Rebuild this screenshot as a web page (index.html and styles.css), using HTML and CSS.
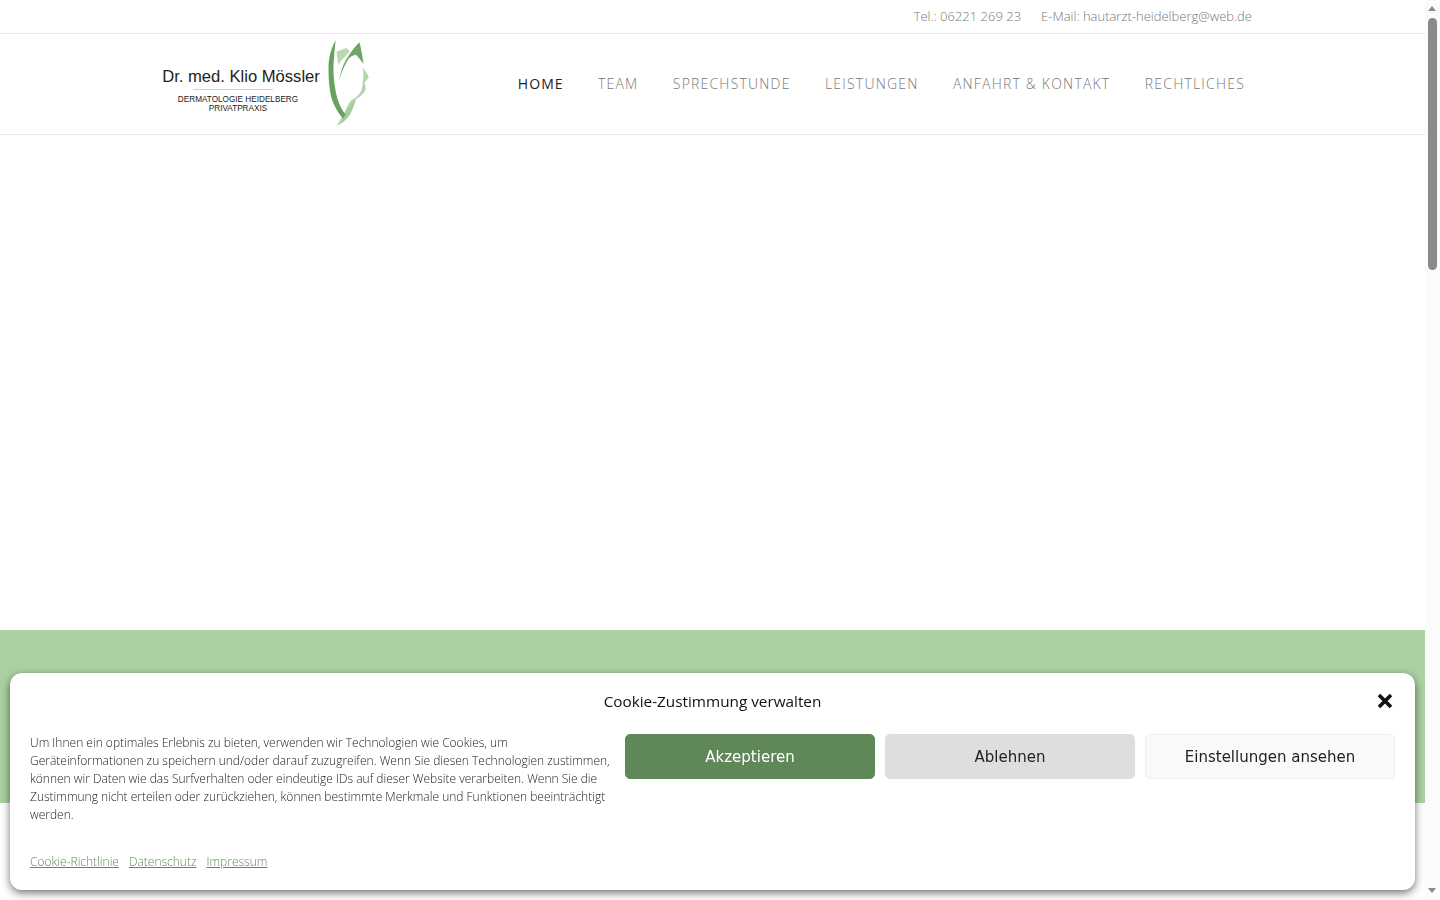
FILE: index.html
```html
<!DOCTYPE html>
<html lang="de">
<head>
    <meta charset="UTF-8">
    <meta name="viewport" content="width=device-width, initial-scale=1.0">
    <link rel="stylesheet" href="styles.css">
    <title>Dr. med. Klio Mössler</title>
</head>
<body>
    <div class="page">
        <div class="topbar">
            <span>Tel.: 06221 269 23</span>
            <span>E-Mail: hautarzt-heidelberg@web.de</span>
        </div>
        <header class="header">
            <a class="logo" href="#">
                <div class="logo-text">
                    <div class="logo-name">Dr. med. Klio Mössler</div>
                    <div class="logo-sub">DERMATOLOGIE HEIDELBERG</div>
                    <div class="logo-sub">PRIVATPRAXIS</div>
                </div>
                <svg class="logo-leaf" width="60" height="96" viewBox="0 2 60 92.700" preserveAspectRatio="none">
                    <path d="M43 33C47 38 49 41 48.500 42.500L44.500 47C45.500 50 46 53 45.500 54C43 59 38 62 35 64C31 68 28 74 24 81C22 84 19 87 16.500 89C19 85 21 82 23 79C25 74 28 68 31 64C36 62 41 58 42 52C43 46 44 40 43 33Z" fill="#b2d5aa"/>
                    <path d="M36 63C31 66 27 73 24 80C22 84 19 87 16.500 89C22 86 28 82 31 76C33 71 35 67 36 63Z" fill="#a5cd9c"/>
                    <path d="M16.500 17C20 16 24 14.500 26.500 13.500L30 17C27 20 24 23 22 25C20 27 19 29 18.500 30C17.500 26 17 21 16.500 17Z" fill="#b9d8b2"/>
                    <path d="M39.500 8C41 14 42.500 21 43.500 29C41 26 38.500 22 36 20C33 20.500 31 21.500 29 23.500C26 27 22 36 19 45C21 35 24 27 28 22C32 16 36 11 39.500 8Z" fill="#6ea667"/>
                    <path d="M15.700 6C11 14 8.500 23 8.500 33C8.500 43 9 52 11 60C13 68 18 76 23 82L25.500 78C21 72 17.500 65 16 57C14 47 13 38 13.500 30C14 21 14.800 13 15.700 6Z" fill="#67a05f"/>
                </svg>
            </a>
            <nav class="nav">
                <a class="active" href="#">HOME</a>
                <a href="#">TEAM</a>
                <a href="#">SPRECHSTUNDE</a>
                <a href="#">LEISTUNGEN</a>
                <a href="#">ANFAHRT &amp; KONTAKT</a>
                <a href="#">RECHTLICHES</a>
            </nav>
        </header>
        <main class="hero"></main>
        <section class="green-band"></section>
    </div>

    <div class="scrollbar"><div class="thumb"></div></div>

    <div class="cookie">
        <div class="cookie-head">
            <div class="cookie-title">Cookie-Zustimmung verwalten</div>
            <svg class="cookie-close" width="16" height="16" viewBox="0 0 16 16">
                <path d="M2 2l12 12M14 2L2 14" stroke="#111" stroke-width="3.600" fill="none"/>
            </svg>
        </div>
        <div class="cookie-body">
            <div class="cookie-text">
                <p>Um Ihnen ein optimales Erlebnis zu bieten, verwenden wir Technologien wie Cookies, um Geräteinformationen zu speichern und/oder darauf zuzugreifen. Wenn Sie diesen Technologien zustimmen, können wir Daten wie das Surfverhalten oder eindeutige IDs auf dieser Website verarbeiten. Wenn Sie die Zustimmung nicht erteilen oder zurückziehen, können bestimmte Merkmale und Funktionen beeinträchtigt werden.</p>
                <div class="cookie-links">
                    <a href="#">Cookie-Richtlinie</a>
                    <a href="#">Datenschutz</a>
                    <a href="#">Impressum</a>
                </div>
            </div>
            <button class="btn btn-accept">Akzeptieren</button>
            <button class="btn btn-deny">Ablehnen</button>
            <button class="btn btn-view">Einstellungen ansehen</button>
        </div>
    </div>
</body>
</html>
```

FILE: styles.css
```css
html, body {
    height: 100%;
}

body {
    margin: 0;
    overflow: hidden;
    background: #fff;
    font-family: "Open Sans", sans-serif;
}

.page {
    width: 1425px;
}

.topbar {
    height: 31px;
    padding-bottom: 2px;
    border-bottom: 1px solid #e8e8e8;
    display: flex;
    justify-content: flex-end;
    align-items: center;
    gap: 20px;
    padding-right: 173px;
    font-size: 13px;
    font-weight: 300;
    color: #777;
}

.header {
    height: 100px;
    border-bottom: 1px solid #eaeaea;
    display: flex;
    align-items: center;
    justify-content: space-between;
    padding: 0 180px 0 162px;
}

.logo {
    display: flex;
    align-items: center;
    text-decoration: none;
    color: #222;
}

.logo-text {
    text-align: center;
    width: 158px;
    margin-top: 13px;
}

.logo-name {
    font-family: "Liberation Sans", sans-serif;
    font-size: 16.600px;
    line-height: 18px;
    padding-bottom: 4px;
    margin-bottom: 5px;
    white-space: nowrap;
    background: linear-gradient(#c3d8bf, #c3d8bf) 31px bottom / 80px 1px no-repeat;
}

.logo-sub {
    font-family: "Liberation Sans", sans-serif;
    font-size: 8.200px;
    line-height: 9.500px;
    margin-right: 6px;
    white-space: nowrap;
}

.nav {
    display: flex;
    gap: 34.400px;
    margin-bottom: 2px;
    font-size: 14px;
    font-weight: 300;
    letter-spacing: 1.200px;
}

.nav a {
    color: #777;
    text-decoration: none;
}

.nav a.active {
    color: #222;
    font-weight: 400;
    letter-spacing: 1.050px;
}

.hero {
    height: 495px;
}

.green-band {
    height: 173px;
    background: #abd1a1;
}

.scrollbar {
    position: fixed;
    top: 0;
    right: 0;
    bottom: 0;
    width: 15px;
    background: #fbfbfb;
}

.scrollbar::before,
.scrollbar::after {
    content: "";
    position: absolute;
    left: 3px;
    border-left: 4.500px solid transparent;
    border-right: 4.500px solid transparent;
}

.scrollbar::before {
    top: 6px;
    border-bottom: 5px solid #8a8a8a;
}

.scrollbar::after {
    bottom: 7px;
    border-top: 5px solid #8a8a8a;
}

.thumb {
    position: absolute;
    top: 18px;
    left: 3px;
    width: 9px;
    height: 252px;
    border-radius: 5px;
    background: #8a8a8a;
}

.cookie {
    position: fixed;
    left: 10px;
    top: 673px;
    width: 1365px;
    height: 177px;
    padding: 20px;
    border-radius: 12px;
    background: #fff;
    box-shadow: 0 3px 8px rgba(0, 0, 0, 0.55);
    color: #222;
}

.cookie-head {
    display: flex;
    justify-content: center;
    align-items: center;
    height: 15px;
    margin-bottom: 2px;
    position: relative;
}

.cookie-title {
    font-size: 15.300px;
    font-weight: 500;
    color: #111;
}

.cookie-close {
    position: absolute;
    right: 2px;
    top: 0;
}

.cookie-body {
    display: grid;
    grid-template-columns: 585px 250px 250px 250px;
    gap: 10px;
    margin-top: 26px;
    align-items: start;
}

.cookie-text {
    padding-right: 5px;
    margin-right: -10px;
    font-size: 12px;
    font-weight: 300;
    line-height: 18px;
    color: #222;
}

.cookie-text p {
    margin: 0 0 29px;
}

.cookie-links {
    display: flex;
    gap: 10px;
}

.cookie-links a {
    color: #5e8a55;
}

.btn {
    height: 45px;
    border-radius: 5px;
    font-family: "DejaVu Sans", sans-serif;
    font-size: 15px;
    cursor: pointer;
}

.btn-accept {
    background: #5f8757;
    border: 1px solid #5f8757;
    color: #fff;
}

.btn-deny {
    background: #dedede;
    border: 1px solid #dedede;
    color: #222;
}

.btn-view {
    background: #f9f9f9;
    border: 1px solid #efefef;
    color: #222;
}
```
